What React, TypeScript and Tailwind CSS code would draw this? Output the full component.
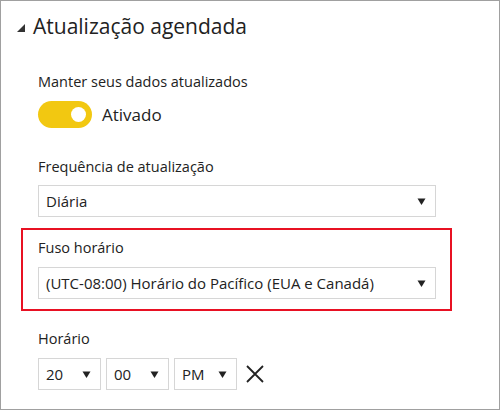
import React from 'react';

function Caret() {
  return (
    <svg width="9" height="9" viewBox="0 0 9 9" className="shrink-0">
      <path d="M0.5 1.5 H8.5 L4.5 8 Z" fill="#222" />
    </svg>
  );
}

function Select({ value, className = '' }: { value: string; className?: string }) {
  return (
    <div className={`h-[32px] border border-[#d6d6d6] bg-white flex items-center justify-between pl-[7px] pr-[9px] text-[15px] text-[#222] ${className}`}>
      <span>{value}</span>
      <Caret />
    </div>
  );
}

export default function App() {
  return (
    <div className="w-[500px] h-[411px] bg-white font-['Open_Sans',sans-serif]">
      <div className="w-[500px] h-[410px] border border-[#a0a0a0] relative">
        {/* Header */}
        <div className="flex items-center pl-[15px] pt-[13px] h-[38px]">
          <svg width="10" height="10" viewBox="0 0 10 10" className="mr-[7px] mt-[2px]">
            <path d="M9 1 V9 H1 Z" fill="#333" />
          </svg>
          <span className="text-[21px] text-[#222] leading-none">Atualização agendada</span>
        </div>

        <div className="pl-[37px] pr-[65px]">
          <div className="mt-[34px] text-[14.5px] text-[#222] leading-[18px]">Manter seus dados atualizados</div>
          <div className="flex items-center mt-[10px]">
            <div className="w-[54px] h-[27px] rounded-full bg-[#f2c811] flex items-center justify-end pr-[6px]">
              <div className="w-[15px] h-[15px] rounded-full bg-white" />
            </div>
            <span className="ml-[10px] text-[17px] text-[#222]">Ativado</span>
          </div>

          <div className="mt-[30px] text-[14.5px] text-[#222] leading-[18px]">Frequência de atualização</div>
          <Select value="Diária" className="mt-[9px] w-[398px]" />
        </div>

        {/* Highlighted time zone */}
        <div className="ml-[20px] mt-[11px] w-[431px] h-[83px] border-2 border-[#e81123] pl-[15px] pt-[9px]">
          <div className="text-[14.5px] text-[#222] leading-[18px]">Fuso horário</div>
          <Select value="(UTC-08:00) Horário do Pacífico (EUA e Canadá)" className="mt-[10px] w-[398px]" />
        </div>

        <div className="pl-[37px]">
          <div className="mt-[19px] text-[14.5px] text-[#222] leading-[18px]">Horário</div>
          <div className="flex items-center mt-[10px] gap-[5px]">
            <Select value="20" className="w-[63px]" />
            <Select value="00" className="w-[63px]" />
            <Select value="PM" className="w-[63px]" />
            <svg width="20" height="20" viewBox="0 0 20 20" className="ml-[3px]">
              <path d="M2 2 L18 18 M18 2 L2 18" stroke="#222" strokeWidth="1.8" />
            </svg>
          </div>
        </div>
      </div>
    </div>
  );
}
